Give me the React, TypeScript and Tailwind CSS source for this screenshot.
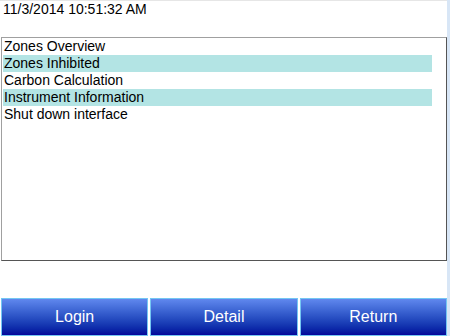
import React from 'react';

const items = [
  { label: 'Zones Overview', on: false },
  { label: 'Zones Inhibited', on: true },
  { label: 'Carbon Calculation', on: false },
  { label: 'Instrument Information', on: true },
  { label: 'Shut down interface', on: false },
];

const buttons = ['Login', 'Detail', 'Return'];

export default function App() {
  return (
    <div className="flex h-[336px] w-[450px] overflow-hidden bg-[#d8e6f6] font-['Liberation_Sans',Arial,sans-serif]">
      <div className="flex w-[447px] flex-col bg-white">
        {/* header with clock */}
        <div className="h-[37px] border-t border-[#e6e6e6] pl-[3px] text-[14px] leading-[16px] text-black">
          11/3/2014 10:51:32 AM
        </div>

        {/* menu list */}
        <div className="ml-[1px] h-[224px] border border-t-[#a0a0a0] border-l-[#a0a0a0] border-r-[#555] border-b-[#555] pl-[1px]">
          {items.map((it) => (
            <div
              key={it.label}
              className={
                it.on
                  ? 'mr-[14px] h-[17px] bg-[#b3e4e4] pl-[1px] text-[14px] leading-[17px] text-black'
                  : 'mr-[14px] h-[17px] pl-[1px] text-[14px] leading-[17px] text-black'
              }
            >
              {it.label}
            </div>
          ))}
        </div>

        {/* bottom buttons */}
        <div className="mt-auto flex h-[38px] gap-[2px] pl-[1px]">
          {buttons.map((b) => (
            <button
              key={b}
              className="flex h-full flex-1 items-center justify-center border border-[#74c6f2] bg-gradient-to-b from-[#6088ee] to-[#06049a] text-[16px] text-white"
            >
              {b}
            </button>
          ))}
        </div>
      </div>
    </div>
  );
}
